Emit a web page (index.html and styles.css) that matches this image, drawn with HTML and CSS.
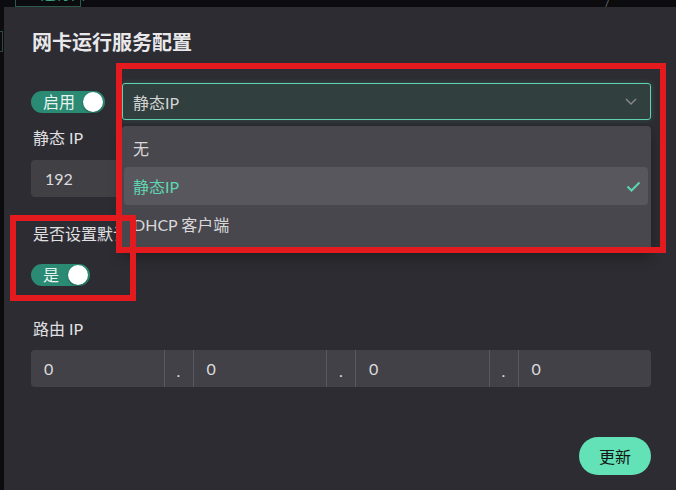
FILE: index.html
```html
<!DOCTYPE html>
<html lang="zh-CN">
<head>
<meta charset="utf-8">
<title>网卡运行服务配置</title>
<link rel="stylesheet" href="styles.css">
</head>
<body>
<div class="topbar">
  <div class="tab"><span class="tab-num">1.</span>运行由</div>
  <span class="slash">/</span>
</div>
<div class="page">
  <div class="leftstrip"><div class="leftbox"></div><div class="leftbox second"></div></div>
  <div class="dialog">
    <h1 class="title">网卡运行服务配置</h1>
    <div class="row1">
      <div class="toggle on wide"><span class="toggle-text">启用</span><span class="knob"></span></div>
      <div class="select">
        <span class="select-value">静态IP</span>
        <svg class="chevron" width="12" height="7" viewBox="0 0 12 7"><polyline points="1,1 6,6 11,1" fill="none" stroke="#8a8a8e" stroke-width="1.4"/></svg>
      </div>
    </div>
    <div class="label">静态 IP</div>
    <div class="input"><span>192</span></div>
    <div class="label gap-lg">是否设置默认网关</div>
    <div class="toggle on narrow"><span class="toggle-text">是</span><span class="knob"></span></div>
    <div class="label route">路由 IP</div>
    <div class="ip-row">
      <div class="seg">0</div><div class="dot">.</div>
      <div class="seg">0</div><div class="dot">.</div>
      <div class="seg">0</div><div class="dot">.</div>
      <div class="seg">0</div>
    </div>
    <div class="actions"><button class="btn">更新</button></div>

    <div class="dropdown">
      <div class="item">无</div>
      <div class="item selected"><span>静态IP</span>
        <svg class="check" width="15" height="11" viewBox="0 0 15 11"><polyline points="1.5,5.5 5.5,9.5 13.5,1.5" fill="none" stroke="#5fd4b0" stroke-width="2"/></svg>
      </div>
      <div class="item">DHCP 客户端</div>
    </div>
  </div>
</div>
<div class="mark mark-select"></div>
<div class="mark mark-toggle"></div>
</body>
</html>
```
FILE: styles.css
```css
* { box-sizing: border-box; }
html, body { margin: 0; padding: 0; }
body {
  width: 676px;
  height: 490px;
  overflow: hidden;
  background: #0c0c0f;
  font-family: Lato, "Noto Sans CJK SC", sans-serif;
  color: #e2e2e4;
  position: relative;
}
.topbar {
  height: 7px;
  overflow: hidden;
  display: flex;
  align-items: flex-end;
}
.tab {
  margin-left: 15px;
  width: 66px;
  height: 22px;
  flex: none;
  border: 1px solid #2c5a4b;
  border-top: none;
  color: #3aa482;
  font-size: 15px;
  line-height: 16px;
  padding-left: 9px;
  white-space: nowrap;
}
.tab-num { margin-right: 6px; font-size: 12px; }
.slash {
  margin-left: 524px;
  color: #77777c;
  font-size: 11px;
  line-height: 8px;
}
.page { display: flex; height: 483px; }
.leftstrip { width: 4px; flex: none; padding-top: 15px; }
.leftbox { width: 3px; height: 2px; }
.leftbox.second { margin-top: 7px; height: 21px; border: 1px solid #2c4a40; border-left: none; }
.dialog {
  flex: 1;
  background: #2d2c32;
  padding: 22px 25px 0 27px;
  position: relative;
}
.title {
  margin: 0;
  padding-left: 1px;
  font-size: 20px;
  line-height: 26px;
  font-weight: 700;
  color: #e8e8ea;
}
.row1 {
  margin-top: 28px;
  display: flex;
  align-items: center;
  gap: 17px;
}
.toggle {
  height: 22px;
  border-radius: 11px;
  background: #2a8a73;
  display: flex;
  align-items: center;
  justify-content: space-between;
  padding: 0 2px 0 12px;
  flex: none;
}
.toggle.wide { width: 74px; }
.toggle.narrow { width: 59px; margin-top: 20px; }
.toggle-text { font-size: 16px; color: #e9f3f0; line-height: 22px; }
.knob {
  width: 20px; height: 20px; border-radius: 50%;
  background: #fff;
  box-shadow: 0 1px 2px rgba(0,0,0,.35);
}
.select {
  flex: 1;
  height: 37px;
  border: 1px solid #5fd4b0;
  border-radius: 3px;
  background: #323f3f;
  box-shadow: 0 0 6px rgba(95,212,176,.22);
  display: flex;
  align-items: center;
  justify-content: space-between;
  padding: 0 13px 0 10px;
}
.select-value { font-size: 16px; color: #d2d4d4; }
.label {
  margin-top: 8px;
  padding-left: 2px;
  font-size: 16px;
  line-height: 20px;
  color: #e0e0e2;
}
.label.gap-lg { margin-top: 27px; }
.label.route { margin-top: 33px; }
.input {
  margin-top: 12px;
  height: 37px;
  width: 300px;
  background: #414045;
  border-radius: 4px;
  display: flex;
  align-items: center;
  padding-left: 14px;
  font-size: 16px;
  color: #dcdcde;
}
.ip-row {
  margin-top: 11px;
  height: 37px;
  display: flex;
  background: #424147;
  border-radius: 4px;
  font-size: 16px;
  color: #dcdcde;
}
.seg {
  flex: 1;
  display: flex;
  align-items: center;
  padding-left: 13px;
}
.dot {
  width: 30px;
  flex: none;
  border-left: 1px solid #5b5a61;
  border-right: 1px solid #5b5a61;
  display: flex;
  align-items: center;
  justify-content: center;
  padding-top: 4px;
}
.actions { display: flex; justify-content: flex-end; margin-top: 50px; }
.btn {
  width: 72px;
  height: 38px;
  border: none;
  border-radius: 19px;
  background: #62e2b6;
  color: #151515;
  font-family: Lato, "Noto Sans CJK SC", sans-serif;
  font-size: 16px;
  padding: 0;
}
.dropdown {
  position: absolute;
  left: 118px;
  top: 119px;
  width: 529px;
  height: 126px;
  background: #48474d;
  border-radius: 4px;
  padding: 4px 3px 5px 2px;
  box-shadow: 0 6px 14px rgba(0,0,0,.3);
}
.item {
  height: 38px;
  display: flex;
  align-items: center;
  justify-content: space-between;
  padding: 0 7px 0 9px;
  font-size: 16px;
  color: #d8d8da;
  border-radius: 4px;
}
.item:first-child { height: 37px; padding-bottom: 2px; }
.item.selected { background: #58575d; color: #5fd4b0; }
.mark {
  position: absolute;
  border: 6px solid #e31b1f;
}
.mark-select { left: 116px; top: 63px; width: 550px; height: 190px; }
.mark-toggle { left: 10px; top: 215px; width: 126px; height: 86px; }
```
